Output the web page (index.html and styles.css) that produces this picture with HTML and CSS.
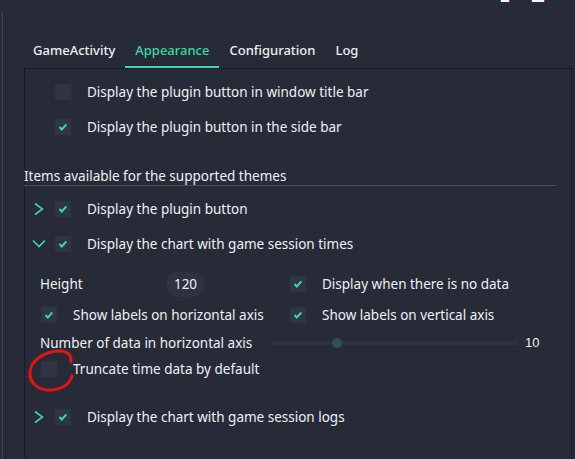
FILE: index.html
```html
<!DOCTYPE html>
<html>
<head>
<meta charset="utf-8">
<link rel="stylesheet" href="styles.css">
</head>
<body>
<div class="titlebar"><span class="mark m1"></span><span class="mark m2"></span></div>
<div class="frame">
  <nav class="tabs">
    <div class="tab">GameActivity</div>
    <div class="tab active">Appearance</div>
    <div class="tab">Configuration</div>
    <div class="tab">Log</div>
  </nav>
  <div class="panel">
    <div class="general">
      <div class="row"><span class="cb"></span><span>Display the plugin button in window title bar</span></div>
      <div class="row"><span class="cb"><svg viewBox="0 0 16 16" width="16" height="16"><polyline points="4.5,8 6.8,10.5 11.3,5.5" /></svg></span><span>Display the plugin button in the side bar</span></div>
    </div>
    <div class="header">Items available for the supported themes</div>
    <div class="themes">
      <div class="row">
        <span class="chev"><svg viewBox="0 0 14 14" width="14" height="14"><polyline points="3,1.5 10.5,7 3,12.5" /></svg></span>
        <span class="cb"><svg viewBox="0 0 16 16" width="16" height="16"><polyline points="4.5,8 6.8,10.5 11.3,5.5" /></svg></span>
        <span>Display the plugin button</span>
      </div>
      <div class="row">
        <span class="chev"><svg viewBox="0 0 14 14" width="14" height="14"><polyline points="1,3.5 7,9.5 13,3.5" /></svg></span>
        <span class="cb"><svg viewBox="0 0 16 16" width="16" height="16"><polyline points="4.5,8 6.8,10.5 11.3,5.5" /></svg></span>
        <span>Display the chart with game session times</span>
      </div>
      <div class="sub">
        <div class="subrow ra">
          <div class="left"><span class="label">Height</span><span class="pill">120</span></div>
          <div class="right"><span class="cb"><svg viewBox="0 0 16 16" width="16" height="16"><polyline points="4.5,8 6.8,10.5 11.3,5.5" /></svg></span><span>Display when there is no data</span></div>
        </div>
        <div class="subrow rb">
          <div class="left"><span class="cb"><svg viewBox="0 0 16 16" width="16" height="16"><polyline points="4.5,8 6.8,10.5 11.3,5.5" /></svg></span><span>Show labels on horizontal axis</span></div>
          <div class="right"><span class="cb"><svg viewBox="0 0 16 16" width="16" height="16"><polyline points="4.5,8 6.8,10.5 11.3,5.5" /></svg></span><span>Show labels on vertical axis</span></div>
        </div>
        <div class="subrow rc">
          <span class="label-wide">Number of data in horizontal axis</span>
          <div class="slider"><span class="thumb"></span></div>
          <span class="num">10</span>
        </div>
        <div class="subrow rd">
          <span class="cb"></span><span>Truncate time data by default</span>
        </div>
      </div>
      <div class="row last">
        <span class="chev"><svg viewBox="0 0 14 14" width="14" height="14"><polyline points="3,1.5 10.5,7 3,12.5" /></svg></span>
        <span class="cb"><svg viewBox="0 0 16 16" width="16" height="16"><polyline points="4.5,8 6.8,10.5 11.3,5.5" /></svg></span>
        <span>Display the chart with game session logs</span>
      </div>
    </div>
  </div>
</div>
<svg class="annot" viewBox="0 0 575 459" width="575" height="459">
  <path d="M71 362 C72 356 68 351 60 351 C45 351 31 360 30 372 C29 384 40 391 52 390 C62 389 70 384 72 376" />
</svg>
</body>
</html>
```
FILE: styles.css
```css
html, body {
  margin: 0;
  height: 459px;
  overflow: hidden;
}
body {
  background: #262b37;
  color: #eef0f3;
  font-family: "Noto Sans", "Open Sans", sans-serif;
  font-size: 13.5px;
  position: relative;
}
.titlebar {
  height: 12px;
  display: flex;
  justify-content: flex-end;
  align-items: flex-start;
  gap: 21px;
  padding-right: 30px;
}
.mark {
  height: 2px;
  background: #f4f4f4;
  border-left: 1px solid #2d4fb0;
  border-right: 1px solid #c9302c;
}
.m1 { width: 8px; }
.m2 { width: 12px; }
.frame {
  margin-left: 2px;
  border-left: 1px solid #3a4954;
  padding-left: 21px;
  height: 447px;
}
.tabs {
  display: flex;
  margin-left: -1px;
  padding-top: 24px;
}
.tab {
  padding: 0 10px 2px;
  line-height: 28px;
  font-size: 13px;
  font-weight: 500;
  border-bottom: 2px solid transparent;
}
.tab.active {
  color: #3dd6a3;
  border-bottom-color: #3dd6a3;
}
.panel {
  border: 1px dotted #0b0d12;
  margin-right: 3px;
  height: 500px;
}
.general { padding-top: 5px; }
.general .row { padding-left: 30px; }
.row {
  display: flex;
  align-items: center;
  height: 35px;
}
.cb {
  width: 16px;
  height: 16px;
  flex: none;
  background: #2f3543;
  margin-right: 16px;
  display: flex;
}
.cb polyline {
  fill: none;
  stroke: #3dd6a3;
  stroke-width: 2;
}
.chev {
  width: 30px;
  flex: none;
  display: flex;
  padding-left: 7px;
  box-sizing: border-box;
}
.chev polyline {
  fill: none;
  stroke: #3dd6a3;
  stroke-width: 1.6;
}
.header {
  margin: 23px 15px 0 -1px;
  line-height: 18px;
  border-bottom: 1px solid #4a4f5b;
}
.themes { padding-top: 5px; }
.sub {
  padding-left: 15px;
  padding-top: 8px;
}
.subrow {
  display: flex;
  align-items: center;
}
.ra { height: 30px; }
.rb { height: 31px; }
.rc { height: 25px; }
.rd { height: 28px; }
.left {
  width: 250px;
  flex: none;
  display: flex;
  align-items: center;
}
.right {
  display: flex;
  align-items: center;
}
.rb .left .cb, .rd .cb { margin-left: 1px; }
.label { width: 126px; }
.pill {
  width: 39px;
  height: 25px;
  border-radius: 13px;
  background: #2e3341;
  display: flex;
  align-items: center;
  justify-content: center;
}
.label-wide { width: 231px; flex: none; }
.slider {
  width: 247px;
  height: 10px;
  flex: none;
  display: flex;
  padding-left: 61px;
  box-sizing: border-box;
  background: linear-gradient(#2c323f, #2c323f) center / 100% 4px no-repeat;
  border-radius: 2px;
}
.thumb {
  width: 10px;
  height: 10px;
  border-radius: 50%;
  background: #2f524f;
}
.num {
  margin-left: 7px;
  font-family: "Liberation Sans", Arial, sans-serif;
  font-size: 13px;
}
.last { margin-top: 16px; }
.annot {
  position: absolute;
  top: 0;
  left: 0;
  pointer-events: none;
}
.annot path {
  fill: none;
  stroke: #e31414;
  stroke-width: 3;
  stroke-linecap: round;
}
```
